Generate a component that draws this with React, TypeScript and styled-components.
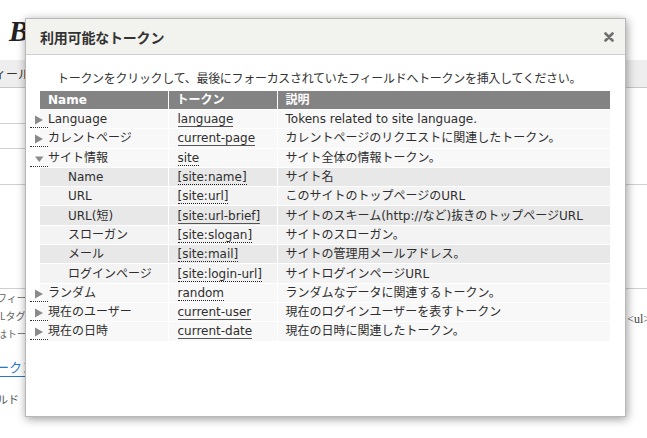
import React from 'react';
import styled, { createGlobalStyle, css } from 'styled-components';

const GlobalStyle = createGlobalStyle`
  html, body {
    margin: 0;
    padding: 0;
    background: #fff;
  }
  body {
    font-family: "DejaVu Sans", "Noto Sans CJK JP", sans-serif;
  }
`;

interface TokenRow {
  name: string;
  token: string;
  description: string;
  level: 0 | 1;
  expander?: 'closed' | 'open';
  dotted?: boolean;
}

const rows: TokenRow[] = [
  { name: 'Language', token: 'language', description: 'Tokens related to site language.', level: 0, expander: 'closed' },
  { name: 'カレントページ', token: 'current-page', description: 'カレントページのリクエストに関連したトークン。', level: 0, expander: 'closed' },
  { name: 'サイト情報', token: 'site', description: 'サイト全体の情報トークン。', level: 0, expander: 'open', dotted: true },
  { name: 'Name', token: '[site:name]', description: 'サイト名', level: 1, dotted: true },
  { name: 'URL', token: '[site:url]', description: 'このサイトのトップページのURL', level: 1, dotted: true },
  { name: 'URL(短)', token: '[site:url-brief]', description: 'サイトのスキーム(http://など)抜きのトップページURL', level: 1 },
  { name: 'スローガン', token: '[site:slogan]', description: 'サイトのスローガン。', level: 1, dotted: true },
  { name: 'メール', token: '[site:mail]', description: 'サイトの管理用メールアドレス。', level: 1, dotted: true },
  { name: 'ログインページ', token: '[site:login-url]', description: 'サイトログインページURL', level: 1, dotted: true },
  { name: 'ランダム', token: 'random', description: 'ランダムなデータに関連するトークン。', level: 0, expander: 'closed', dotted: true },
  { name: '現在のユーザー', token: 'current-user', description: '現在のログインユーザーを表すトークン', level: 0, expander: 'closed' },
  { name: '現在の日時', token: 'current-date', description: '現在の日時に関連したトークン。', level: 0, expander: 'closed' },
];

/* ---------- page behind the dialog ---------- */

const Page = styled.div`
  position: relative;
  width: 647px;
  height: 438px;
  overflow: hidden;
  font-family: "Liberation Serif", "Noto Sans CJK JP", serif;
  color: #555;
`;

const PageTitle = styled.h1`
  margin: 0;
  height: 60px;
  padding: 14px 0 0 9px;
  box-sizing: border-box;
  font-family: "Liberation Serif", serif;
  font-style: italic;
  font-weight: bold;
  font-size: 29px;
  line-height: 34px;
  color: #222;
`;

const FieldBar = styled.div`
  height: 28px;
  background: #eeeeee;
  border-bottom: 1px solid #c8c8c8;
  box-sizing: border-box;
  font-family: "Noto Sans CJK JP", sans-serif;
  font-size: 12px;
  line-height: 28px;
  color: #333;
  text-indent: -6px;
  white-space: nowrap;
`;

const BgRow = styled.div<{ $h: number; $short?: boolean }>`
  height: ${(p) => p.$h}px;
  box-sizing: border-box;
  border-bottom: 1px solid #cfcfcf;
  width: ${(p) => (p.$short ? '40px' : '100%')};
`;

const BgTextBlock = styled.div`
  display: flex;
  justify-content: space-between;
  white-space: nowrap;
`;

const BgLines = styled.div`
  font-family: "Noto Sans CJK JP", serif;
  font-size: 10px;
  line-height: 18px;
  color: #666;
`;

const BgLine = styled.div<{ $shift?: number }>`
  text-indent: ${(p) => p.$shift ?? -3}px;
`;

const BgCode = styled.div`
  margin-top: 21px;
  font-size: 12px;
  line-height: 18px;
  color: #444;
  margin-right: -3px;
`;

const BgLink = styled.a`
  display: inline-block;
  margin-top: 15px;
  margin-left: -4px;
  font-family: "Noto Sans CJK JP", sans-serif;
  font-size: 13px;
  line-height: 18px;
  color: #2a78c2;
  text-decoration: none;
  border-bottom: 1px solid #2a78c2;
  white-space: nowrap;
`;

const BgNote = styled.div`
  margin-top: 13px;
  margin-left: -3px;
  font-family: "Noto Sans CJK JP", sans-serif;
  font-size: 11px;
  line-height: 18px;
  color: #555;
  white-space: nowrap;
`;

/* ---------- dialog ---------- */

const Dialog = styled.div`
  position: absolute;
  left: 25px;
  top: 18px;
  width: 601px;
  height: 399px;
  box-sizing: border-box;
  background: #fff;
  border: 1px solid #b8b8b8;
  box-shadow: 1px 2px 9px rgba(0, 0, 0, 0.4);
  font-family: "DejaVu Sans", "Noto Sans CJK JP", sans-serif;
  color: #333;
`;

const TitleBar = styled.div`
  display: flex;
  align-items: center;
  justify-content: space-between;
  height: 36px;
  box-sizing: border-box;
  padding: 0 10px 0 14px;
  background: #f2f2ee;
  border-bottom: 1px solid #cfcfcf;
`;

const Title = styled.h2`
  margin: 0;
  font-family: "Noto Sans CJK JP", sans-serif;
  font-size: 14px;
  font-weight: bold;
  color: #333;
  letter-spacing: -0.2px;
`;

const CloseButton = styled.button`
  display: flex;
  align-items: center;
  justify-content: center;
  width: 12px;
  height: 12px;
  padding: 0;
  border: 0;
  background: none;
  cursor: pointer;
`;

const Content = styled.div`
  padding: 14px 14px 0 14px;
`;

const Intro = styled.p`
  margin: 0 0 4px 0;
  padding-left: 17px;
  font-family: "Noto Sans CJK JP", sans-serif;
  font-size: 12px;
  line-height: 18px;
  letter-spacing: -0.3px;
  color: #333;
  white-space: nowrap;
`;

const Table = styled.table`
  width: 570px;
  border-collapse: collapse;
  table-layout: fixed;
  font-size: 12px;
`;

const HeadCell = styled.th<{ $w?: number }>`
  ${(p) => p.$w && css`width: ${p.$w}px;`}
  height: 18px;
  padding: 0 8px;
  box-sizing: border-box;
  background: #838383;
  color: #fff;
  font-weight: bold;
  text-align: left;
  line-height: 18px;
  border-left: 1px solid #fff;
  &:first-child {
    border-left: 0;
  }
`;

const Row = styled.tr<{ $tone: 'top' | 'dark' | 'light' }>`
  background: ${(p) => (p.$tone === 'top' ? '#f8f8f8' : p.$tone === 'dark' ? '#e8e8e8' : '#f3f3f3')};
  border-top: 1px solid #fff;
`;

const Cell = styled.td<{ $indent?: number }>`
  height: 18.3px;
  padding: 0 0 0 ${(p) => p.$indent ?? 8}px;
  line-height: 18px;
  white-space: nowrap;
  overflow: visible;
  color: #2e2e2e;
  border-left: 1px solid #fff;
  &:first-child {
    border-left: 0;
  }
`;

const Expander = styled.a`
  display: inline-block;
  position: relative;
  top: 5px;
  width: 18px;
  height: 12px;
  margin-left: -18px;
  vertical-align: top;
  border-bottom: 1px dotted #333;
  svg {
    position: absolute;
    left: 5px;
    top: 0;
  }
`;

const TokenLink = styled.span<{ $dotted?: boolean }>`
  border-bottom: 1px ${(p) => (p.$dotted ? 'dotted #222' : 'solid #555')};
  color: #2e2e2e;
  cursor: pointer;
`;

const Triangle: React.FC<{ open?: boolean }> = ({ open }) =>
  open ? (
    <svg width="9" height="9" viewBox="0 0 9 9">
      <path d="M0 2.5 L8.5 2.5 L4.25 8 Z" fill="#8a8a8a" />
    </svg>
  ) : (
    <svg width="8" height="10" viewBox="0 0 8 10">
      <path d="M0 0.5 L8 5 L0 9.5 Z" fill="#8a8a8a" />
    </svg>
  );

export default function App() {
  let childIndex = 0;
  return (
    <Page>
      <GlobalStyle />
      <PageTitle>B</PageTitle>
      <FieldBar>ィールド</FieldBar>
      <BgRow $h={36} $short />
      <BgRow $h={25} $short />
      <BgRow $h={36} />
      <BgRow $h={104} />
      <BgTextBlock>
        <BgLines>
          <BgLine>フィールド</BgLine>
          <BgLine $shift={0}>Lタグ</BgLine>
          <BgLine>はトークン</BgLine>
        </BgLines>
        <BgCode>&lt;ul&gt;</BgCode>
      </BgTextBlock>
      <BgLink>ークン</BgLink>
      <BgNote>ルド</BgNote>

      <Dialog role="dialog">
        <TitleBar>
          <Title>利用可能なトークン</Title>
          <CloseButton aria-label="close">
            <svg width="10" height="10" viewBox="0 0 10 10">
              <path d="M1.5 1.5 L8.5 8.5 M8.5 1.5 L1.5 8.5" stroke="#6f6f6f" strokeWidth="2.6" strokeLinecap="round" />
            </svg>
          </CloseButton>
        </TitleBar>
        <Content>
          <Intro>トークンをクリックして、最後にフォーカスされていたフィールドへトークンを挿入してください。</Intro>
          <Table>
            <thead>
              <tr>
                <HeadCell $w={128}>Name</HeadCell>
                <HeadCell $w={109}>トークン</HeadCell>
                <HeadCell>説明</HeadCell>
              </tr>
            </thead>
            <tbody>
              {rows.map((r) => {
                let tone: 'top' | 'dark' | 'light' = 'top';
                if (r.level === 1) {
                  tone = childIndex % 2 === 0 ? 'dark' : 'light';
                  childIndex += 1;
                }
                return (
                  <Row key={r.token} $tone={tone}>
                    <Cell $indent={r.level === 1 ? 28 : 8}>
                      {r.expander && (
                        <Expander>
                          <Triangle open={r.expander === 'open'} />
                        </Expander>
                      )}
                      {r.name}
                    </Cell>
                    <Cell $indent={9}>
                      <TokenLink $dotted={r.dotted}>{r.token}</TokenLink>
                    </Cell>
                    <Cell>{r.description}</Cell>
                  </Row>
                );
              })}
            </tbody>
          </Table>
        </Content>
      </Dialog>
    </Page>
  );
}
